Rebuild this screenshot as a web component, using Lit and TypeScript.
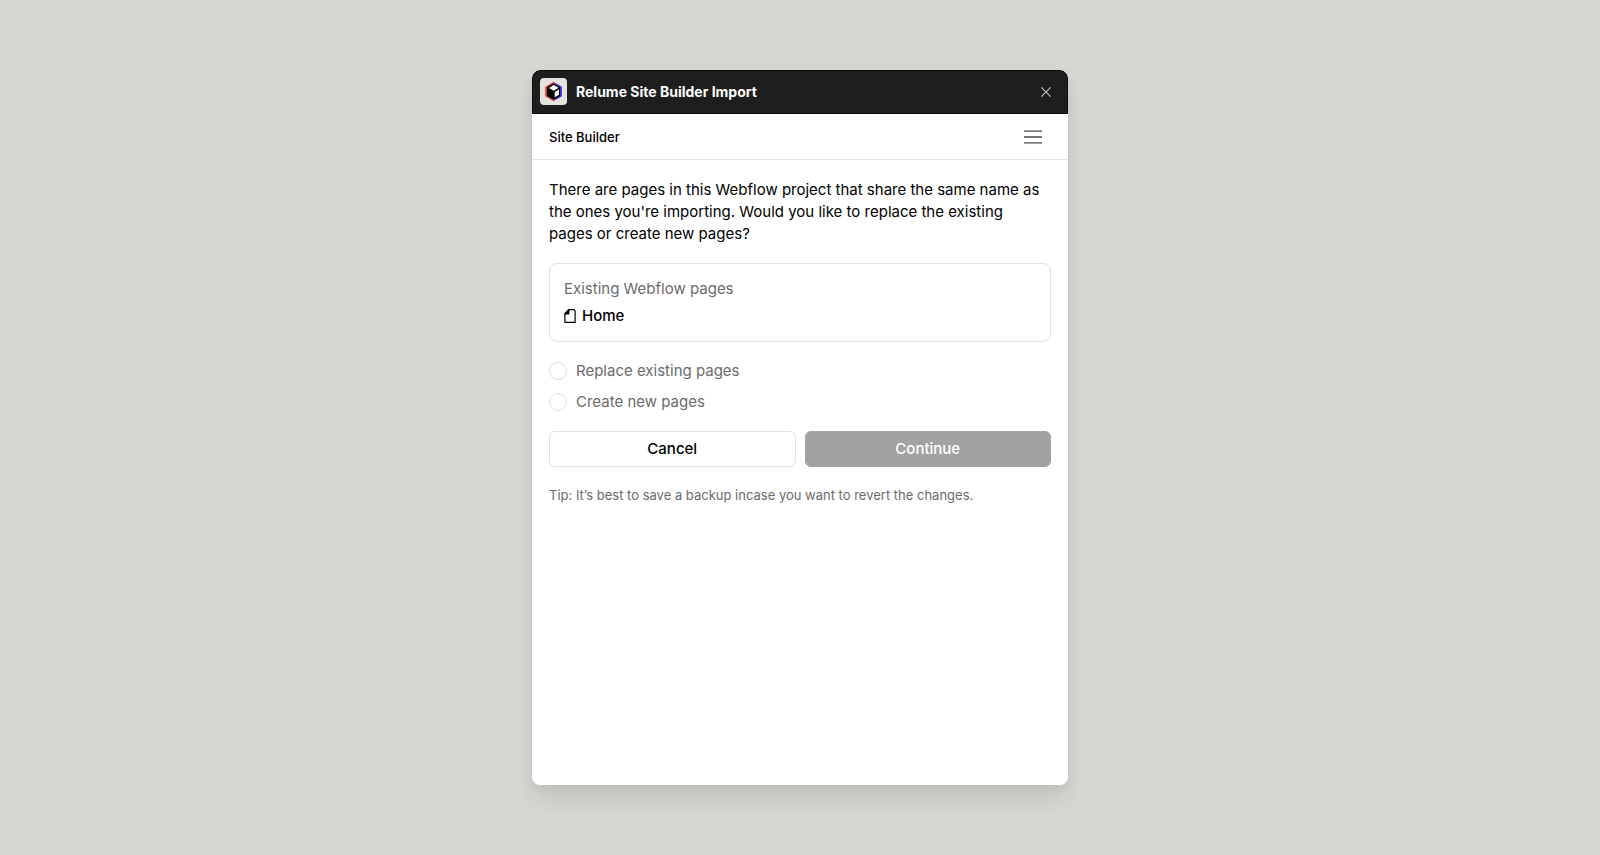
import { LitElement, html, css, svg } from "lit";
import { customElement, state } from "lit/decorators.js";

const logo = svg`
  <svg viewBox="0 0 27 27" width="27" height="27" aria-hidden="true">
    <defs>
      <linearGradient id="edge" x1="0" y1="0" x2="1" y2="0">
        <stop offset="0" stop-color="#ff5a3c"></stop>
        <stop offset="0.5" stop-color="#c0506e"></stop>
        <stop offset="0.75" stop-color="#4a2fe0"></stop>
        <stop offset="1" stop-color="#5a3cff"></stop>
      </linearGradient>
    </defs>
    <rect width="27" height="27" rx="4" fill="#e6e3df"></rect>
    <path d="M13.5 4.6 21.3 9v9l-7.8 4.5L5.7 18V9z" fill="url(#edge)" stroke="url(#edge)" stroke-width="1.4" stroke-linejoin="round"></path>
    <path d="M13.5 5.2 20.2 9.2v8.7l-6.7 3.9-6.7-3.9V9.2z" fill="#050505"></path>
    <path d="M8.9 9.9 13.7 7.1l4.9 2.6-4.9 3z" fill="#fff"></path>
    <path d="M14.7 14.1 19 11.5v5.2l-4.3 2.6z" fill="#fff"></path>
  </svg>`;

@customElement("app-root")
export class AppRoot extends LitElement {
  @state() private choice = "";

  static styles = css`
    :host {
      display: flex;
      align-items: center;
      justify-content: center;
      box-sizing: border-box;
      min-height: 100vh;
      padding: 24px;
      background: #d7d6d2;
      font-family: Inter, "Liberation Sans", sans-serif;
      font-size: 15px;
      line-height: 22px;
      color: #000;
    }
    * {
      box-sizing: border-box;
    }
    button {
      font: inherit;
      cursor: pointer;
    }
    svg {
      display: block;
    }
    .dialog {
      display: flex;
      flex-direction: column;
      width: 100%;
      max-width: 536px;
      min-height: 715px;
      border-radius: 8px;
      overflow: hidden;
      background: #fff;
      box-shadow: 0 14px 24px rgba(0, 0, 0, 0.09), 0 4px 10px rgba(0, 0, 0, 0.04);
    }
    .titlebar {
      display: flex;
      align-items: center;
      gap: 9px;
      height: 44px;
      padding: 0 12px 1px 7px;
      background: #1e1e1e;
      border: 1px solid #0c0c0c;
      border-radius: 8px 8px 0 0;
      color: #fff;
    }
    .title {
      flex: 1;
      margin: 0;
      font-size: 14px;
      font-weight: 700;
    }
    .icon {
      padding: 0;
      border: 0;
      background: none;
    }
    .navbar {
      display: flex;
      align-items: center;
      justify-content: space-between;
      height: 46px;
      padding: 0 26px 0 17px;
      border-bottom: 1px solid #e4e4e4;
    }
    .section {
      margin: 0;
      font-size: 13px;
      font-weight: 500;
    }
    .content {
      display: flex;
      flex-direction: column;
      gap: 18px;
      padding: 19px 17px;
    }
    p {
      margin: 0;
    }
    .intro {
      padding-right: 4px;
    }
    .pages {
      padding: 14px;
      border: 1px solid #e2e2e2;
      border-radius: 8px;
    }
    .heading {
      margin: 0;
      font-size: 15px;
      font-weight: 400;
      color: #6b6b6b;
    }
    .list {
      margin: 5px 0 0;
      padding: 0;
      list-style: none;
    }
    .page {
      display: flex;
      align-items: center;
      gap: 6px;
      font-weight: 500;
    }
    .choices {
      display: flex;
      flex-direction: column;
      gap: 9px;
      margin: 0;
      padding: 0;
      border: 0;
      color: #6b6b6b;
    }
    .choice {
      display: flex;
      align-items: center;
      gap: 9px;
    }
    .radio {
      appearance: none;
      width: 18px;
      height: 18px;
      margin: 0;
      border: 1px solid #dedede;
      border-radius: 50%;
      background: #fff;
    }
    .radio:checked {
      border: 5px solid #000;
    }
    .actions {
      display: grid;
      grid-template-columns: 1fr 1fr;
      gap: 9px;
    }
    .action {
      height: 36px;
      padding: 0;
      border: 1px solid #e0e0e0;
      border-radius: 6px;
      background: #fff;
      color: #000;
      font-weight: 500;
    }
    .primary {
      border-color: #000;
      background: #000;
      color: #fff;
    }
    .primary:disabled {
      border-color: #a2a2a2;
      background: #a2a2a2;
      cursor: default;
    }
    .tip {
      font-size: 13px;
      line-height: 20px;
      color: #6b6b6b;
    }
  `;

  private option(value: string, label: string) {
    return html`<label class="choice">
      <input
        class="radio"
        type="radio"
        name="mode"
        value=${value}
        .checked=${this.choice === value}
        @change=${() => (this.choice = value)}
      />
      ${label}
    </label>`;
  }

  render() {
    return html`
      <main class="dialog">
        <header class="titlebar">
          ${logo}
          <h1 class="title">Relume Site Builder Import</h1>
          <button class="icon" aria-label="Close">
            <svg width="18" height="18" viewBox="0 0 18 18" fill="none" stroke="#c4c4c4" stroke-width="1.1">
              <path d="M4.3 4.3 13.7 13.7M13.7 4.3 4.3 13.7"></path>
            </svg>
          </button>
        </header>
        <nav class="navbar">
          <h2 class="section">Site Builder</h2>
          <button class="icon" aria-label="Menu">
            <svg width="18" height="14" viewBox="0 0 18 14" fill="none" stroke="#4a4a4a" stroke-width="1.3">
              <path d="M0 1.2h18M0 7h18M0 12.8h18"></path>
            </svg>
          </button>
        </nav>
        <section class="content">
          <p class="intro">
            There are pages in this Webflow project that share the same name as the ones you're
            importing. Would you like to replace the existing pages or create new pages?
          </p>
          <div class="pages">
            <h3 class="heading">Existing Webflow pages</h3>
            <ul class="list">
              <li class="page">
                <svg width="12" height="14" viewBox="0 0 12 14" fill="none" stroke="#000" stroke-width="1.2">
                  <path d="M4.8.7H9.6Q11.1.7 11.1 2.2V13.3H.9V4.8z" stroke-linejoin="round"></path>
                  <path d="M4.8.7V4.8H.9z" fill="#000" stroke-linejoin="round"></path>
                </svg>
                Home
              </li>
            </ul>
          </div>
          <fieldset class="choices" aria-label="Import mode">
            ${this.option("replace", "Replace existing pages")}
            ${this.option("create", "Create new pages")}
          </fieldset>
          <div class="actions">
            <button class="action">Cancel</button>
            <button class="action primary" ?disabled=${!this.choice}>Continue</button>
          </div>
          <p class="tip">Tip: It’s best to save a backup incase you want to revert the changes.</p>
        </section>
      </main>
    `;
  }
}
